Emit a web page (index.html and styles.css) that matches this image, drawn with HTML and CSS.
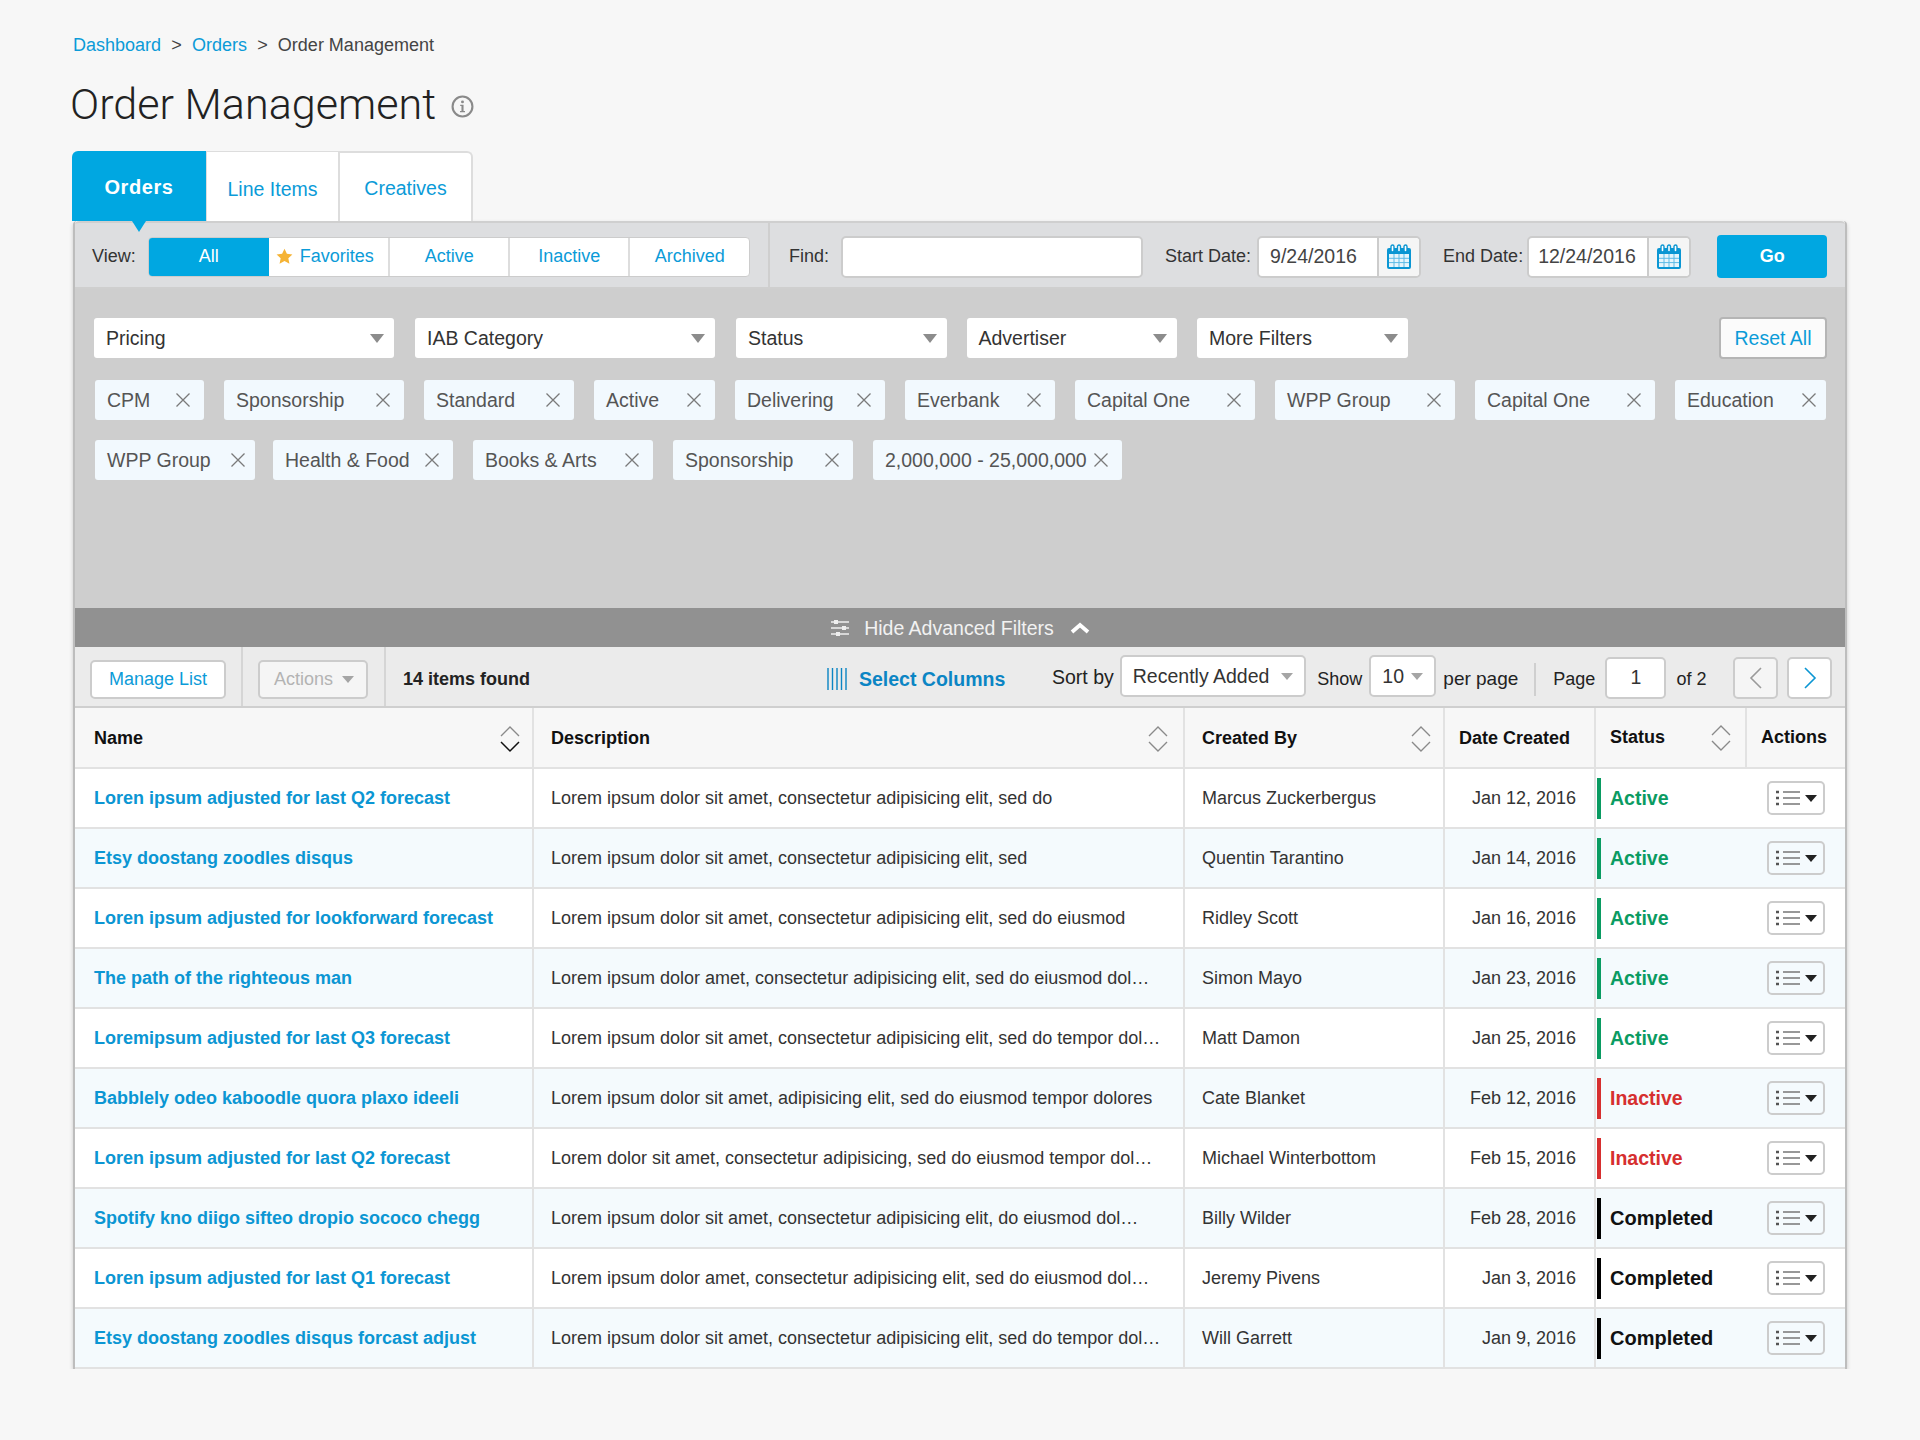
FILE: index.html
```html
<!DOCTYPE html>
<html lang="en">

<head>
  <meta charset="UTF-8">
  <title>Order Management</title>
  <link rel="stylesheet" href="styles.css">
</head>

<body>
  <svg class="sprite" xmlns="http://www.w3.org/2000/svg">
    <symbol id="i-cal" viewBox="0 0 26 26">
      <rect x="1" y="4" width="24" height="21" rx="2" fill="#0b96d3" />
      <rect x="3" y="10" width="20" height="13" fill="#e6f5fc" />
      <path d="M3 14.3h20M3 18.6h20M8 10v13M13 10v13M18 10v13" stroke="#5dbbe6" stroke-width="1" />
      <rect x="5" y="1" width="3" height="7" rx="1.5" fill="#fff" stroke="#0b96d3" stroke-width="1.4" />
      <rect x="11.5" y="1" width="3" height="7" rx="1.5" fill="#fff" stroke="#0b96d3" stroke-width="1.4" />
      <rect x="18" y="1" width="3" height="7" rx="1.5" fill="#fff" stroke="#0b96d3" stroke-width="1.4" />
    </symbol>
    <symbol id="i-x" viewBox="0 0 16 16">
      <path d="M1.500 1.500l13 13M14.500 1.500l-13 13" stroke="#7a7a7a" stroke-width="1.3" fill="none" />
    </symbol>
    <symbol id="i-sort" viewBox="0 0 20 28">
      <path d="M1 11l9-9 9 9" stroke="#8a8a8a" stroke-width="1.4" fill="none" />
      <path d="M1 17l9 9 9-9" stroke="#8a8a8a" stroke-width="1.4" fill="none" />
    </symbol>
    <symbol id="i-sort-down" viewBox="0 0 20 28">
      <path d="M1 11l9-9 9 9" stroke="#8a8a8a" stroke-width="1.4" fill="none" />
      <path d="M1 17l9 9 9-9" stroke="#111" stroke-width="1.5" fill="none" />
    </symbol>
    <symbol id="i-list" viewBox="0 0 24 16">
      <path d="M7 2h17M7 8h17M7 14h17" stroke="#777" stroke-width="1.6" />
      <path d="M0 2h3M0 8h3M0 14h3" stroke="#555" stroke-width="2.4" />
    </symbol>
  </svg>

  <div class="page">
    <nav class="breadcrumb">
      <a href="#">Dashboard</a><span class="sep">&gt;</span><a href="#">Orders</a><span class="sep">&gt;</span><span>Order Management</span>
    </nav>

    <div class="title-row">
      <h1>Order Management</h1>
      <svg class="info" width="23" height="23" viewBox="0 0 22 22">
        <circle cx="11" cy="11" r="9.500" fill="none" stroke="#8a8a8a" stroke-width="2" />
        <circle cx="11" cy="6.600" r="1.400" fill="#8a8a8a" />
        <path d="M8.800 9.400h3.200v6h1.400v1.200H8.600v-1.200H10v-4.800H8.800z" fill="#8a8a8a" />
      </svg>
    </div>

    <div class="tabs">
      <a class="tab tab-active" href="#">Orders</a>
      <a class="tab" href="#">Line Items</a>
      <a class="tab tab-last" href="#">Creatives</a>
    </div>

    <div class="panel">
      <div class="viewbar">
        <div class="view-left">
          <span class="label">View:</span>
          <div class="segments">
            <a class="seg seg-active" href="#">All</a>
            <a class="seg seg-fav" href="#">
              <svg class="star" width="17" height="17" viewBox="0 0 20 20">
                <path d="M10 1l2.800 5.900 6.500.8-4.800 4.400 1.300 6.400L10 15.300l-5.800 3.200 1.300-6.400L.7 7.700l6.500-.8z" fill="#f5b335" />
              </svg>Favorites</a>
            <a class="seg" href="#">Active</a>
            <a class="seg" href="#">Inactive</a>
            <a class="seg seg-last" href="#">Archived</a>
          </div>
        </div>
        <div class="view-right">
          <span class="label">Find:</span>
          <div class="find"></div>
          <span class="label label-start">Start Date:</span>
          <div class="date">
            <span class="date-value">9/24/2016</span>
            <span class="date-icon"><svg width="26" height="26"><use href="#i-cal" /></svg></span>
          </div>
          <span class="label label-end">End Date:</span>
          <div class="date">
            <span class="date-value date-value-end">12/24/2016</span>
            <span class="date-icon"><svg width="26" height="26"><use href="#i-cal" /></svg></span>
          </div>
          <a class="go" href="#">Go</a>
        </div>
      </div>

      <div class="filters">
        <div class="filter-selects">
          <div class="select select-lg">Pricing<i class="caret"></i></div>
          <div class="select select-lg">IAB Category<i class="caret"></i></div>
          <div class="select">Status<i class="caret"></i></div>
          <div class="select">Advertiser<i class="caret"></i></div>
          <div class="select">More Filters<i class="caret"></i></div>
          <a class="reset" href="#">Reset All</a>
        </div>
        <div class="chips">
          <span class="chip chip-xs">CPM<svg width="16" height="16"><use href="#i-x" /></svg></span>
          <span class="chip chip-l">Sponsorship<svg width="16" height="16"><use href="#i-x" /></svg></span>
          <span class="chip chip-m">Standard<svg width="16" height="16"><use href="#i-x" /></svg></span>
          <span class="chip chip-s">Active<svg width="16" height="16"><use href="#i-x" /></svg></span>
          <span class="chip chip-m">Delivering<svg width="16" height="16"><use href="#i-x" /></svg></span>
          <span class="chip chip-m">Everbank<svg width="16" height="16"><use href="#i-x" /></svg></span>
          <span class="chip chip-l">Capital One<svg width="16" height="16"><use href="#i-x" /></svg></span>
          <span class="chip chip-l">WPP Group<svg width="16" height="16"><use href="#i-x" /></svg></span>
          <span class="chip chip-l">Capital One<svg width="16" height="16"><use href="#i-x" /></svg></span>
          <span class="chip chip-m chip-tight">Education<svg width="16" height="16"><use href="#i-x" /></svg></span>
        </div>
        <div class="chips">
          <span class="chip chip-w">WPP Group<svg width="16" height="16"><use href="#i-x" /></svg></span>
          <span class="chip chip-l">Health &amp; Food<svg width="16" height="16"><use href="#i-x" /></svg></span>
          <span class="chip chip-l">Books &amp; Arts<svg width="16" height="16"><use href="#i-x" /></svg></span>
          <span class="chip chip-l">Sponsorship<svg width="16" height="16"><use href="#i-x" /></svg></span>
          <span class="chip chip-xl">2,000,000 - 25,000,000<svg width="16" height="16"><use href="#i-x" /></svg></span>
        </div>
      </div>

      <div class="hide-bar">
        <svg width="20" height="18" viewBox="0 0 20 18">
          <path d="M1 3h18M1 9h18M1 15h18" stroke="#eee" stroke-width="1.600" />
          <rect x="4" y="1" width="4" height="4" fill="#eee" />
          <rect x="12" y="7" width="4" height="4" fill="#eee" />
          <rect x="6" y="13" width="4" height="4" fill="#eee" />
        </svg>
        <span>Hide Advanced Filters</span>
        <svg class="hide-chevron" width="20" height="12" viewBox="0 0 20 12">
          <path d="M2 10l8-7 8 7" stroke="#fff" stroke-width="3.800" fill="none" />
        </svg>
      </div>

      <div class="toolbar">
        <div class="tool-group tool-manage"><a class="btn" href="#">Manage List</a></div>
        <div class="tool-group tool-actions"><span class="btn btn-disabled">Actions<i class="caret caret-light"></i></span></div>
        <div class="items-found">14 items found</div>
        <a class="select-columns" href="#">
          <svg width="20" height="22" viewBox="0 0 20 22">
            <path d="M1 0v22M5.500 0v22M10 0v22M14.500 0v22M19 0v22" stroke="#0b85c4" stroke-width="1.400" />
          </svg>Select Columns</a>
        <span class="tool-label tool-sort">Sort by</span>
        <div class="mini-select mini-sort">Recently Added<i class="caret caret-light"></i></div>
        <span class="tool-label tool-show">Show</span>
        <div class="mini-select mini-show">10<i class="caret caret-light"></i></div>
        <span class="tool-label tool-perpage">per page</span>
        <span class="tool-divider"></span>
        <span class="tool-label">Page</span>
        <div class="page-input">1</div>
        <span class="tool-label tool-of">of 2</span>
        <a class="pager pager-prev" href="#"><svg width="14" height="24" viewBox="0 0 14 24"><path d="M12 2L2 12l10 10" stroke="#9a9a9a" stroke-width="1.600" fill="none" /></svg></a>
        <a class="pager" href="#"><svg width="14" height="24" viewBox="0 0 14 24"><path d="M2 2l10 10L2 22" stroke="#0b96d3" stroke-width="1.600" fill="none" /></svg></a>
      </div>

      <table class="orders">
        <colgroup>
          <col class="col-name">
          <col class="col-desc">
          <col class="col-created">
          <col class="col-date">
          <col class="col-status">
          <col class="col-actions">
        </colgroup>
        <thead>
          <tr>
            <th><div class="th-inner">Name<svg width="20" height="28"><use href="#i-sort-down" /></svg></div></th>
            <th class="th-desc"><div class="th-inner">Description<svg width="20" height="28"><use href="#i-sort" /></svg></div></th>
            <th><div class="th-inner">Created By<svg width="20" height="28"><use href="#i-sort" /></svg></div></th>
            <th class="th-date">Date Created</th>
            <th class="th-status"><div class="th-inner">Status<svg width="20" height="28"><use href="#i-sort" /></svg></div></th>
            <th class="th-actions">Actions</th>
          </tr>
        </thead>
        <tbody>
          <tr>
            <td><a href="#">Loren ipsum adjusted for last Q2 forecast</a></td>
            <td>Lorem ipsum dolor sit amet, consectetur adipisicing elit, sed do</td>
            <td>Marcus Zuckerbergus</td>
            <td class="td-date">Jan 12, 2016</td>
            <td class="td-status"><div class="status status-active">Active</div></td>
            <td class="td-actions"><span class="row-menu"><svg width="24" height="16"><use href="#i-list" /></svg><i class="caret caret-dark"></i></span></td>
          </tr>
          <tr>
            <td><a href="#">Etsy doostang zoodles disqus</a></td>
            <td>Lorem ipsum dolor sit amet, consectetur adipisicing elit, sed</td>
            <td>Quentin Tarantino</td>
            <td class="td-date">Jan 14, 2016</td>
            <td class="td-status"><div class="status status-active">Active</div></td>
            <td class="td-actions"><span class="row-menu"><svg width="24" height="16"><use href="#i-list" /></svg><i class="caret caret-dark"></i></span></td>
          </tr>
          <tr>
            <td><a href="#">Loren ipsum adjusted for lookforward forecast</a></td>
            <td>Lorem ipsum dolor sit amet, consectetur adipisicing elit, sed do eiusmod</td>
            <td>Ridley Scott</td>
            <td class="td-date">Jan 16, 2016</td>
            <td class="td-status"><div class="status status-active">Active</div></td>
            <td class="td-actions"><span class="row-menu"><svg width="24" height="16"><use href="#i-list" /></svg><i class="caret caret-dark"></i></span></td>
          </tr>
          <tr>
            <td><a href="#">The path of the righteous man</a></td>
            <td>Lorem ipsum dolor amet, consectetur adipisicing elit, sed do eiusmod dol…</td>
            <td>Simon Mayo</td>
            <td class="td-date">Jan 23, 2016</td>
            <td class="td-status"><div class="status status-active">Active</div></td>
            <td class="td-actions"><span class="row-menu"><svg width="24" height="16"><use href="#i-list" /></svg><i class="caret caret-dark"></i></span></td>
          </tr>
          <tr>
            <td><a href="#">Loremipsum adjusted for last Q3 forecast</a></td>
            <td>Lorem ipsum dolor sit amet, consectetur adipisicing elit, sed do tempor dol…</td>
            <td>Matt Damon</td>
            <td class="td-date">Jan 25, 2016</td>
            <td class="td-status"><div class="status status-active">Active</div></td>
            <td class="td-actions"><span class="row-menu"><svg width="24" height="16"><use href="#i-list" /></svg><i class="caret caret-dark"></i></span></td>
          </tr>
          <tr>
            <td><a href="#">Babblely odeo kaboodle quora plaxo ideeli</a></td>
            <td>Lorem ipsum dolor sit amet, adipisicing elit, sed do eiusmod tempor dolores</td>
            <td>Cate Blanket</td>
            <td class="td-date">Feb 12, 2016</td>
            <td class="td-status"><div class="status status-inactive">Inactive</div></td>
            <td class="td-actions"><span class="row-menu"><svg width="24" height="16"><use href="#i-list" /></svg><i class="caret caret-dark"></i></span></td>
          </tr>
          <tr>
            <td><a href="#">Loren ipsum adjusted for last Q2 forecast</a></td>
            <td>Lorem dolor sit amet, consectetur adipisicing, sed do eiusmod tempor dol…</td>
            <td>Michael Winterbottom</td>
            <td class="td-date">Feb 15, 2016</td>
            <td class="td-status"><div class="status status-inactive">Inactive</div></td>
            <td class="td-actions"><span class="row-menu"><svg width="24" height="16"><use href="#i-list" /></svg><i class="caret caret-dark"></i></span></td>
          </tr>
          <tr>
            <td><a href="#">Spotify kno diigo sifteo dropio sococo chegg</a></td>
            <td>Lorem ipsum dolor sit amet, consectetur adipisicing elit, do eiusmod dol…</td>
            <td>Billy Wilder</td>
            <td class="td-date">Feb 28, 2016</td>
            <td class="td-status"><div class="status status-done">Completed</div></td>
            <td class="td-actions"><span class="row-menu"><svg width="24" height="16"><use href="#i-list" /></svg><i class="caret caret-dark"></i></span></td>
          </tr>
          <tr>
            <td><a href="#">Loren ipsum adjusted for last Q1 forecast</a></td>
            <td>Lorem ipsum dolor amet, consectetur adipisicing elit, sed do eiusmod dol…</td>
            <td>Jeremy Pivens</td>
            <td class="td-date">Jan 3, 2016</td>
            <td class="td-status"><div class="status status-done">Completed</div></td>
            <td class="td-actions"><span class="row-menu"><svg width="24" height="16"><use href="#i-list" /></svg><i class="caret caret-dark"></i></span></td>
          </tr>
          <tr>
            <td><a href="#">Etsy doostang zoodles disqus forcast adjust</a></td>
            <td>Lorem ipsum dolor sit amet, consectetur adipisicing elit, sed do tempor dol…</td>
            <td>Will Garrett</td>
            <td class="td-date">Jan 9, 2016</td>
            <td class="td-status"><div class="status status-done">Completed</div></td>
            <td class="td-actions"><span class="row-menu"><svg width="24" height="16"><use href="#i-list" /></svg><i class="caret caret-dark"></i></span></td>
          </tr>
        </tbody>
      </table>
    </div>
  </div>
</body>

</html>
```

FILE: styles.css
```css
* {
  box-sizing: border-box;
}

body {
  margin: 0;
  background: #f7f7f7;
  font-family: "Liberation Sans", Arial, sans-serif;
  font-size: 18px;
  color: #333;
}

a {
  color: #0b9bd8;
  text-decoration: none;
}

.sprite {
  display: none;
}

.page {
  width: 1847px;
  padding: 34px 0 0 73px;
}

/* header */
.breadcrumb {
  line-height: 22px;
  color: #444;
}

.breadcrumb .sep {
  margin: 0 10.200px;
}

.title-row {
  display: flex;
  align-items: center;
  gap: 15px;
  height: 50px;
  margin: 23px 0 22px -3px;
}

h1 {
  margin: 0;
  font-family: Roboto, "Liberation Sans", sans-serif;
  font-size: 43.100px;
  font-weight: 300;
  color: #222;
}

.info {
  margin-top: 4px;
}

/* tabs */
.tabs {
  display: flex;
  height: 70px;
  margin-left: -1px;
}

.tab {
  position: relative;
  display: flex;
  align-items: center;
  justify-content: center;
  width: 133px;
  padding-top: 6px;
  background: #fff;
  border: 1px solid #ddd;
  border-bottom: none;
  font-size: 19.500px;
}

.tab-last {
  border-top-right-radius: 6px;
  border-width: 2px 2px 0 1px;
  width: 134px;
  padding-top: 2px;
}

.tab-active {
  width: 134px;
  padding: 2px 0 0;
  background: #00a7e1;
  border: none;
  border-radius: 6px 0 0 0;
  color: #fff;
  font-size: 20px;
  font-weight: bold;
  letter-spacing: 0.600px;
}

.tab-active::after {
  content: "";
  position: absolute;
  left: 60px;
  bottom: -11px;
  border-left: 7px solid transparent;
  border-right: 7px solid transparent;
  border-top: 11px solid #00a7e1;
}

/* panel */
.panel {
  background: #fff;
  border: 2px solid #bdbdbd;
  border-top: none;
  border-bottom: none;
  box-shadow: 0 2px 4px rgba(0, 0, 0, 0.18);
  border-radius: 4px 4px 0 0;
}

.viewbar {
  display: flex;
  height: 68px;
  padding-top: 3px;
  background: #dddee0;
  border-top: 2px solid #cfcfcf;
  border-bottom: 2px solid #cfcfcf;
  border-radius: 4px 4px 0 0;
}

.view-left {
  display: flex;
  align-items: center;
  gap: 12px;
  width: 695px;
  margin-top: -3px;
  padding: 3px 0 0 17px;
  border-right: 2px solid #cfcfcf;
}

.label {
  color: #333;
}

.segments {
  display: flex;
  height: 40px;
  background: #fff;
  border: 1px solid #ccc;
  border-radius: 4px;
}

.seg {
  display: flex;
  align-items: center;
  justify-content: center;
  width: 120px;
  border-right: 2px solid #ddd;
}

.seg-last {
  width: 119px;
  border-right: none;
}

.seg-active {
  background: #00a7e1;
  color: #fff;
  border-radius: 3px 0 0 3px;
  border-right: none;
}

.seg-fav {
  justify-content: flex-start;
  width: 121.500px;
  padding-left: 7px;
}

.star {
  margin-right: 7px;
}

.view-right {
  display: flex;
  align-items: center;
  padding-left: 19px;
}

.find {
  width: 302px;
  height: 42px;
  margin-left: 12px;
  background: #fff;
  border: 2px solid #ccc;
  border-radius: 5px;
}

.label-start {
  margin-left: 22px;
  margin-right: 6px;
}

.label-end {
  margin-left: 22px;
  margin-right: 4px;
}

.date {
  display: flex;
  height: 42px;
  background: #fff;
  border: 2px solid #ccc;
  border-radius: 5px;
}

.date-value {
  display: flex;
  align-items: center;
  width: 118px;
  padding-left: 11px;
  font-size: 19.500px;
  color: #444;
}

.date-value-end {
  padding-left: 9px;
}

.date-icon {
  display: flex;
  align-items: center;
  justify-content: center;
  width: 42px;
  background: #f5f5f5;
  border-left: 2px solid #ccc;
  border-radius: 0 4px 4px 0;
}

.go {
  display: flex;
  align-items: center;
  justify-content: center;
  width: 110px;
  height: 43px;
  margin-left: 26px;
  background: #00a7e1;
  border-radius: 4px;
  color: #fff;
  font-weight: bold;
}

/* advanced filters */
.filters {
  height: 319px;
  padding: 28px 18px 0 19px;
  background: #cecece;
}

.filter-selects {
  display: flex;
  align-items: center;
  gap: 20px;
  margin-bottom: 21px;
}

.select {
  display: flex;
  align-items: center;
  justify-content: space-between;
  width: 210.500px;
  height: 40px;
  padding: 0 10px 0 12px;
  background: #fff;
  border-radius: 3px;
  font-size: 19.500px;
}

.select-lg {
  width: 300px;
  margin-right: 1px;
}

.caret {
  display: inline-block;
  border-left: 7.500px solid transparent;
  border-right: 7.500px solid transparent;
  border-top: 9px solid #8c8c8c;
}

.caret-light {
  border-left-width: 6px;
  border-right-width: 6px;
  border-top: 7px solid #a5a5a5;
}

.caret-dark {
  border-left-width: 6px;
  border-right-width: 6px;
  border-top: 7px solid #222;
}

.reset {
  display: flex;
  align-items: center;
  justify-content: center;
  width: 108px;
  height: 42px;
  margin-left: auto;
  background: #fbfbfb;
  border: 2px solid #b5b5b5;
  border-radius: 4px;
  font-size: 19.500px;
}

.chips {
  display: flex;
  gap: 20px;
  margin: 0 0 20px 1px;
}

.chip {
  display: flex;
  align-items: center;
  justify-content: space-between;
  height: 40px;
  padding: 0 13px 0 12px;
  background: #f2f9fe;
  border-radius: 3px;
  font-size: 19.500px;
  color: #555;
}

.chip-xs {
  width: 109px;
}

.chip-s {
  width: 121px;
}

.chip-m {
  width: 150px;
}

.chip-tight {
  width: 151px;
  padding-right: 9px;
}

.chip-w {
  width: 160px;
  margin-right: -2px;
  padding-right: 9px;
}

.chip-l {
  width: 180px;
}

.chip-xl {
  width: 249px;
}

/* hide bar */
.hide-bar {
  display: flex;
  align-items: center;
  justify-content: center;
  gap: 14px;
  height: 39px;
  background: #919191;
  color: #f2f2f2;
  font-size: 19.500px;
}

.hide-bar span {
  padding-top: 2px;
}

.hide-chevron {
  margin-left: 2px;
}

/* list toolbar */
.toolbar {
  display: flex;
  align-items: center;
  height: 61px;
  padding: 5px 0 0;
  background: #ebebeb;
  border-bottom: 2px solid #cfcfcf;
  white-space: nowrap;
}

.toolbar > * {
  flex-shrink: 0;
}

.tool-group {
  display: flex;
  align-items: center;
  align-self: stretch;
  margin-top: -5px;
  padding-top: 5px;
  border-right: 2px solid #d5d5d5;
}

.tool-manage {
  width: 168px;
  padding-left: 15px;
}

.tool-actions {
  width: 143px;
  padding-left: 15px;
}

.btn {
  display: flex;
  align-items: center;
  justify-content: center;
  width: 136px;
  height: 39px;
  background: #fff;
  border: 2px solid #ccc;
  border-radius: 5px;
}

.btn-disabled {
  justify-content: space-between;
  width: 110px;
  padding: 0 12px 0 14px;
  background: #f5f5f5;
  color: #b3b3b3;
}

.items-found {
  width: 441px;
  padding-left: 17px;
  font-weight: bold;
  color: #222;
}

.select-columns {
  display: flex;
  align-items: center;
  gap: 12px;
  width: 225px;
  font-size: 19.500px;
  font-weight: bold;
  color: #0b85c4;
}

.tool-label {
  color: #222;
}

.tool-sort {
  margin-top: -4px;
  font-size: 19.500px;
}

.mini-select {
  display: flex;
  align-items: center;
  justify-content: space-between;
  height: 42px;
  margin: -6px 0 0 6px;
  padding: 0 11px;
  background: #fff;
  border: 2px solid #ccc;
  border-radius: 5px;
  font-size: 19.500px;
}

.mini-sort {
  width: 186.500px;
}

.mini-show {
  width: 67px;
  margin-left: 7px;
}

.tool-show {
  margin-left: 11px;
}

.tool-perpage {
  margin-left: 7px;
  font-size: 19px;
}

.tool-divider {
  width: 2px;
  height: 33px;
  margin: 0 17px 0 16px;
  background: #cfcfcf;
}

.page-input {
  display: flex;
  align-items: center;
  justify-content: center;
  width: 61px;
  height: 42px;
  margin: -3px 0 0 10px;
  background: #fff;
  border: 2px solid #ccc;
  border-radius: 5px;
  font-size: 19.500px;
}

.tool-of {
  margin-left: 10px;
}

.pager {
  display: flex;
  align-items: center;
  justify-content: center;
  width: 45px;
  height: 42px;
  margin: -3px 0 0 9px;
  background: #fff;
  border: 2px solid #ccc;
  border-radius: 5px;
}

.pager-prev {
  margin-left: 27px;
  background: #f5f5f5;
}

/* orders table */
.orders {
  width: 100%;
  table-layout: fixed;
  border-collapse: collapse;
}

.col-name {
  width: 458px;
}

.col-desc {
  width: 651px;
}

.col-created {
  width: 260px;
}

.col-date {
  width: 151px;
}

.col-status {
  width: 151px;
}

th {
  height: 60px;
  padding: 2px 12px 0 17px;
  background: #f7f7f7;
  border: 2px solid #e2e2e2;
  border-top: none;
  text-align: left;
  color: #111;
  white-space: nowrap;
}

th:first-child,
td:first-child {
  border-left: none;
}

th:first-child {
  padding-left: 19px;
}

th:last-child,
td:last-child {
  border-right: none;
}

.th-inner {
  display: flex;
  align-items: center;
  justify-content: space-between;
}

.th-desc {
  padding-right: 15px;
}

.th-date {
  padding: 2px 0 0 14px;
}

.th-status,
.th-actions {
  padding: 0 14px;
}

td {
  height: 60px;
  padding: 0 18px 0 17px;
  border: 2px solid #e2e2e2;
  border-top: none;
  color: #333;
  white-space: nowrap;
  overflow: hidden;
}

td:first-child {
  padding-left: 19px;
}

tbody tr:nth-child(even) td {
  background: #f4fafd;
}

td a {
  font-weight: bold;
  color: #0b96d3;
}

.td-date {
  text-align: right;
}

.td-status {
  padding: 0 0 0 1px;
  border-right: none;
}

.status {
  display: flex;
  align-items: center;
  height: 41px;
  padding-left: 9px;
  border-left: 4px solid;
  font-size: 19.500px;
  font-weight: bold;
}

.status-active {
  border-color: #0a9b62;
  color: #0a9b62;
}

.status-inactive {
  border-color: #d62f2f;
  color: #d62f2f;
}

.status-done {
  border-color: #000;
  color: #111;
  font-size: 20px;
}

.td-actions {
  padding: 0 0 0 21px;
  border-left: none;
}

.row-menu {
  display: inline-flex;
  align-items: center;
  justify-content: space-between;
  width: 58px;
  height: 34px;
  padding: 0 6px 0 7px;
  vertical-align: middle;
  background: transparent;
  border: 2px solid #ccc;
  border-radius: 5px;
}
```
